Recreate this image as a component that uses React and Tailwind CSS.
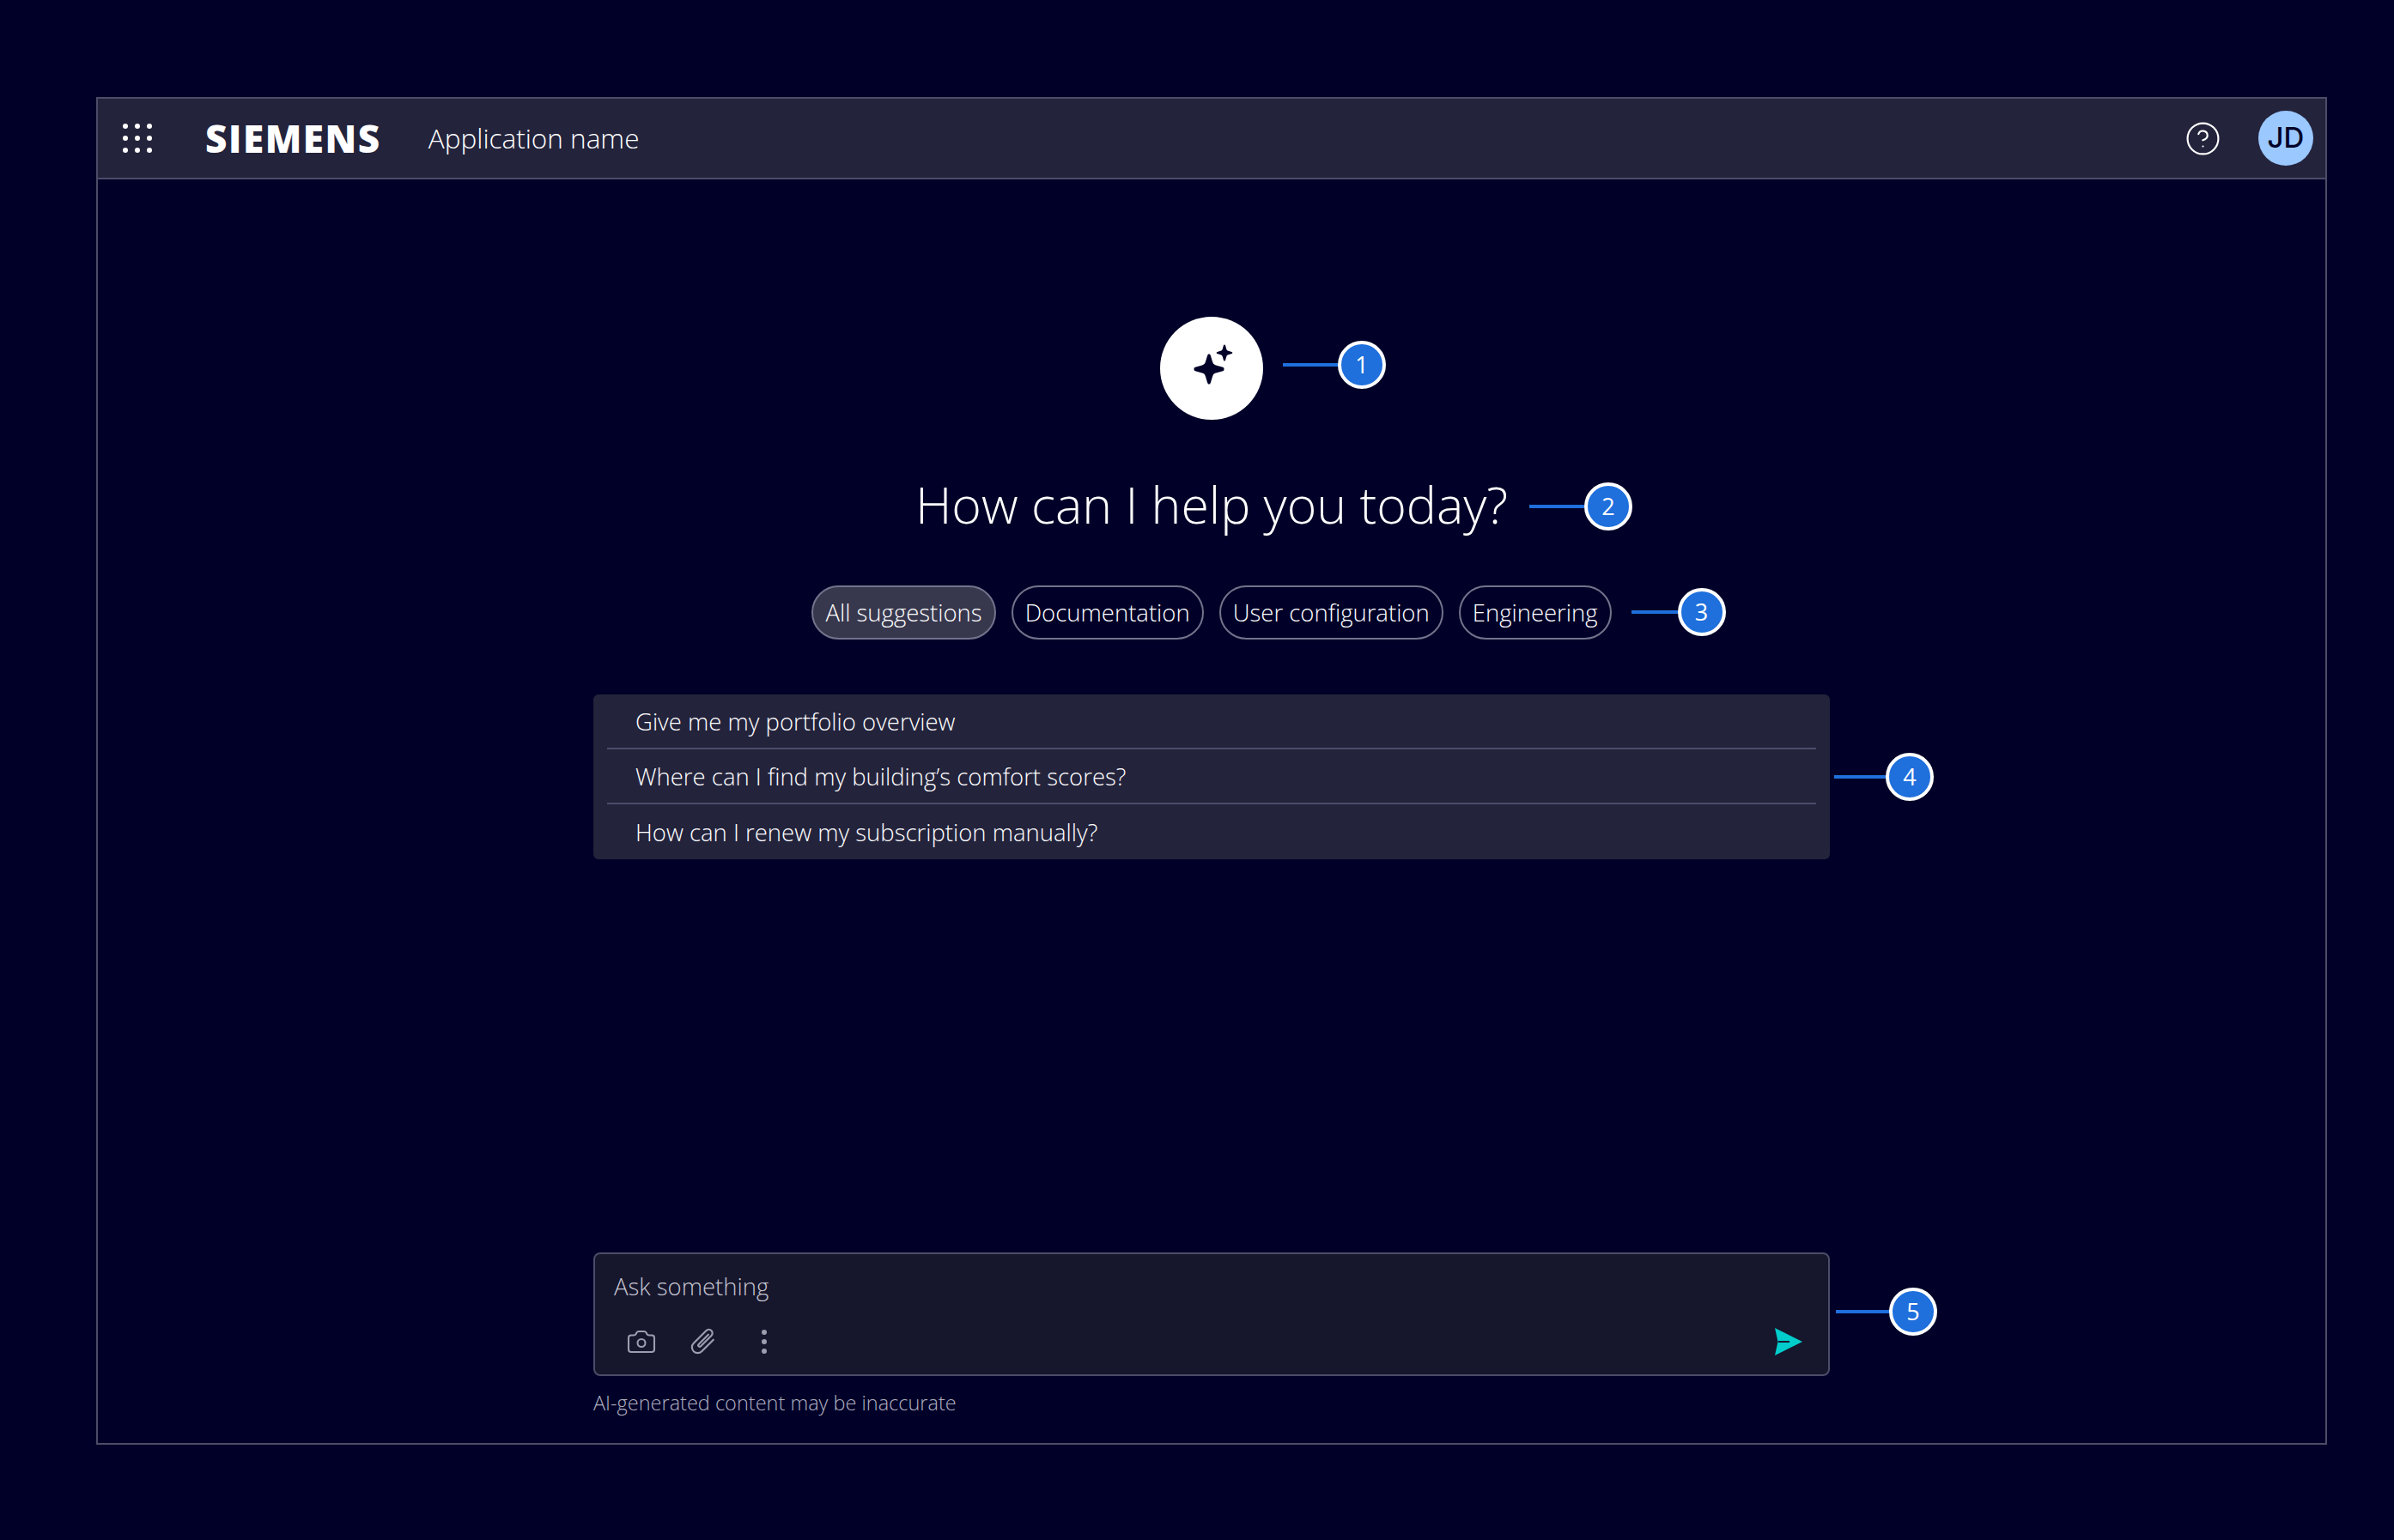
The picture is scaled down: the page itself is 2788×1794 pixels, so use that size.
import React from 'react';
import { Camera, CircleHelp } from 'lucide-react';

const chips = ['All suggestions', 'Documentation', 'User configuration', 'Engineering'];
const suggestions = [
  'Give me my portfolio overview',
  'Where can I find my building’s comfort scores?',
  'How can I renew my subscription manually?',
];

// Numbered annotation that hangs off the right edge of its parent
const Callout = ({ n, className, lineClass }) => (
  <div className={`absolute left-full flex items-center -translate-y-1/2 ${className}`}>
    <div className={`h-[4px] bg-[#1f6fdc] ${lineClass}`} />
    <div className="w-[56px] h-[56px] rounded-full border-[4px] border-white bg-[#1f6fdc] flex items-center justify-center text-[27px] font-medium text-white">
      {n}
    </div>
  </div>
);

const Sparkles = () => (
  <svg viewBox="0 0 60 60" className="mt-[4px] w-[60px] h-[60px] text-[#000028]" fill="currentColor">
    <path d="M27 11.500c1 0 1.500.6 1.800 1.500l2.300 7.500c.7 2.300 1.600 3.200 3.900 3.900l8 2.400c1 .3 1.500.8 1.500 2.200s-.5 1.900-1.500 2.200l-8 2.400c-2.300.7-3.200 1.600-3.900 3.900l-2.300 7.500c-.3.9-.8 1.500-1.800 1.500s-1.500-.6-1.800-1.500l-2.300-7.500c-.7-2.300-1.600-3.200-3.900-3.900l-8-2.400c-1-.3-1.500-.8-1.500-2.200s.5-1.900 1.500-2.200l8-2.400c2.300-.7 3.200-1.600 3.900-3.900l2.300-7.500c.3-.9.8-1.500 1.800-1.500z" />
    <path
      transform="translate(0 -3)"
      d="M45 3.500c.6 0 .9.300 1.100.9l1.100 4c.4 1.300 1 1.900 2.300 2.300l3.900 1.200c.6.2.9.5.9 1.100s-.3.9-.9 1.100l-3.900 1.200c-1.300.4-1.900 1-2.300 2.300l-1.100 4c-.2.6-.5.9-1.100.9s-.9-.3-1.100-.9l-1.100-4c-.4-1.300-1-1.900-2.300-2.300l-3.900-1.200c-.6-.2-.9-.5-.9-1.100s.3-.9.9-1.100l3.900-1.200c1.300-.4 1.900-1 2.300-2.300l1.100-4c.2-.6.5-.9 1.100-.9z"
    />
  </svg>
);

const AppsIcon = () => (
  <svg viewBox="0 0 36 36" className="w-[36px] h-[36px] text-white" fill="currentColor">
    {[4, 18, 32].map((y) =>
      [4, 18, 32].map((x) => <circle key={`${x}-${y}`} cx={x} cy={y} r="3" />)
    )}
  </svg>
);

const ClipIcon = () => (
  <svg viewBox="0 0 24 24" className="w-[40px] h-[40px]" fill="none" stroke="currentColor" strokeWidth="1.3" strokeLinecap="round">
    <path
      transform="rotate(45 12 12)"
      d="M16 6v11.500a4 4 0 0 1-8 0V5a2.500 2.500 0 0 1 5 0v10.500a1 1 0 0 1-2 0V6"
    />
  </svg>
);

const SendIcon = () => (
  <svg viewBox="0 0 32 32" className="w-[32px] h-[32px]">
    <path d="M0 0L32 16L0 32L3.500 16Z" fill="#00cccc" />
    <path d="M4 16H17" stroke="#16162c" strokeWidth="2" />
  </svg>
);

const App = () => {
  return (
    <div className="w-full h-screen bg-[#000028] pt-[113px] pb-[111px] pl-[112px] pr-[78px] text-white font-['Open_Sans',sans-serif]">
      <div className="h-full flex flex-col border-2 border-[#4c4c68]">
        {/* Header */}
        <div className="h-[94px] shrink-0 flex items-center bg-[#23233c] border-b-2 border-[#4c4c68] pl-[28px] pr-[14px]">
          <AppsIcon />
          <span className="ml-[61px] text-[44px] font-extrabold leading-none tracking-[1.6px]">SIEMENS</span>
          <span className="ml-[55px] text-[31.500px] font-light">Application name</span>
          <CircleHelp className="ml-auto w-[43px] h-[43px]" strokeWidth={1.2} />
          <div className="ml-[43px] w-[64px] h-[64px] rounded-full bg-[#9bc8ff] flex items-center justify-center font-['Inter',sans-serif] text-[33px] font-medium text-[#000028]">
            JD
          </div>
        </div>

        {/* Content */}
        <div className="flex-1 flex flex-col items-center pt-[160px]">
          <div className="relative w-[120px] h-[120px] rounded-full bg-white flex items-center justify-center">
            <Sparkles />
            <Callout n={1} className="top-[56px] ml-[23px]" lineClass="w-[64px]" />
          </div>

          <h1 className="relative mt-[58px] text-[59px] leading-[80px] font-light whitespace-nowrap">
            How can I help you today?
            <Callout n={2} className="top-[43px] ml-[25px]" lineClass="w-[64px]" />
          </h1>

          <div className="relative mt-[55px] flex gap-[18px]">
            {chips.map((chip, i) => (
              <div
                key={chip}
                className={`h-[63px] px-[14px] flex items-center rounded-full border-2 border-[#73738c] text-[27.500px] font-light whitespace-nowrap ${i === 0 ? 'bg-[#37374d]' : ''}`}
              >
                {chip}
              </div>
            ))}
            <Callout n={3} className="top-[31px] ml-[23px]" lineClass="w-[54px]" />
          </div>

          <div className="relative w-[1440px] mt-[64px] rounded-[6px] bg-[#23233c] px-[16px]">
            {suggestions.map((s, i) => (
              <div
                key={s}
                className={`h-[64px] flex items-center pl-[33px] pt-[2px] text-[27.500px] font-light ${i < 2 ? 'border-b-2 border-[#4c4c68]' : ''}`}
              >
                {s}
              </div>
            ))}
            <Callout n={4} className="top-1/2 ml-[5px]" lineClass="w-[60px]" />
          </div>

          {/* Input */}
          <div className="mt-auto w-[1440px] pb-[30px]">
            <div className="relative h-[144px] rounded-[8px] border-2 border-[#4c4c68] bg-[#16162c] pl-[22px] pr-[30px] pt-[18px] flex flex-col">
              <div className="text-[27.500px] leading-[40px] font-light text-[#c4c4d0]">Ask something</div>
              <div className="mt-[24px] flex items-center text-[#9d9db0]">
                <Camera className="ml-[14px] w-[36px] h-[36px]" strokeWidth={1.4} />
                <div className="ml-[34px]">
                  <ClipIcon />
                </div>
                <div className="ml-[33px] w-[36px] flex flex-col items-center gap-[5px]">
                  <span className="w-[6px] h-[6px] rounded-full bg-[#9d9db0]" />
                  <span className="w-[6px] h-[6px] rounded-full bg-[#9d9db0]" />
                  <span className="w-[6px] h-[6px] rounded-full bg-[#9d9db0]" />
                </div>
                <div className="ml-auto">
                  <SendIcon />
                </div>
              </div>
              <Callout n={5} className="top-[67px] ml-[9px]" lineClass="w-[62px]" />
            </div>
            <div className="mt-[15px] text-[23.500px] leading-[33px] font-light text-[#b0b0c0]">
              AI-generated content may be inaccurate
            </div>
          </div>
        </div>
      </div>
    </div>
  );
};

export default App;
